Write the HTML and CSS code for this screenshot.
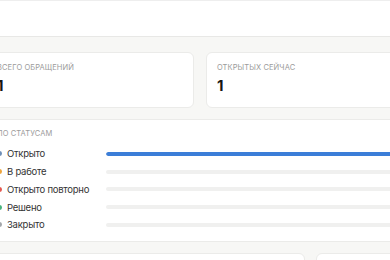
FILE: index.html
```html
<!DOCTYPE html>
<html lang="ru">
<head>
    <meta charset="UTF-8">
    <meta name="viewport" content="width=device-width, initial-scale=1.0">
    <title>Обращения</title>
    <link rel="stylesheet" href="styles.css">
</head>
<body>
    <header class="topbar"></header>

    <main class="dashboard">
        <div class="stats">
            <div class="card stat">
                <div class="card-label">Всего обращений</div>
                <div class="stat-value">1</div>
            </div>
            <div class="card stat">
                <div class="card-label">Открытых сейчас</div>
                <div class="stat-value">1</div>
            </div>
        </div>

        <div class="card statuses">
            <div class="card-label">По статусам</div>
            <ul class="status-list">
                <li class="status-row">
                    <span class="status-name"><i class="dot dot-open"></i>Открыто</span>
                    <span class="track"><span class="fill" style="width: 100%"></span></span>
                </li>
                <li class="status-row">
                    <span class="status-name"><i class="dot dot-work"></i>В работе</span>
                    <span class="track"><span class="fill" style="width: 0%"></span></span>
                </li>
                <li class="status-row">
                    <span class="status-name"><i class="dot dot-reopen"></i>Открыто повторно</span>
                    <span class="track"><span class="fill" style="width: 0%"></span></span>
                </li>
                <li class="status-row">
                    <span class="status-name"><i class="dot dot-solved"></i>Решено</span>
                    <span class="track"><span class="fill" style="width: 0%"></span></span>
                </li>
                <li class="status-row">
                    <span class="status-name"><i class="dot dot-closed"></i>Закрыто</span>
                    <span class="track"><span class="fill" style="width: 0%"></span></span>
                </li>
            </ul>
        </div>

        <div class="bottom">
            <div class="card block"></div>
            <div class="card block"></div>
        </div>
    </main>
</body>
</html>
```

FILE: styles.css
```css
* {
    box-sizing: border-box;
}

body {
    font-family: Inter, "Noto Sans", Arial, sans-serif;
    margin: 0;
    padding: 0;
    background-color: #f7f7f5;
    color: #222222;
    overflow: hidden;
}

.topbar {
    height: 37px;
    background-color: #ffffff;
    border-top: 1px solid #eeeeee;
    border-bottom: 1px solid #e8e8e6;
}

.dashboard {
    margin-left: -14px;
    width: 428px;
    padding: 15px 0;
    display: grid;
    gap: 11px;
}

.card {
    background-color: #ffffff;
    border: 1px solid #ebebe9;
    border-radius: 6px;
}

.card-label {
    font-size: 7.5px;
    line-height: 10px;
    text-transform: uppercase;
    color: #9b9b9b;
    letter-spacing: 0.1px;
}

/* Верхние карточки */
.stats {
    display: grid;
    grid-template-columns: 1fr 1fr;
    gap: 12px;
}

.stat {
    height: 56px;
    padding: 10px 10px 0;
}

.stat-value {
    margin-top: 3px;
    font-size: 15px;
    font-weight: 700;
    line-height: 19px;
    color: #161616;
}

/* Статусы */
.statuses {
    padding: 9px 10px 7px;
}

.status-list {
    list-style: none;
    margin: 6px 0 0;
    padding: 0;
}

.status-row {
    display: grid;
    grid-template-columns: 109px 1fr;
    align-items: center;
    height: 17.75px;
}

.status-name {
    display: flex;
    align-items: center;
    gap: 5px;
    font-size: 9.5px;
    letter-spacing: -0.25px;
    color: #333333;
}

.dot {
    width: 5px;
    height: 5px;
    border-radius: 50%;
    flex-shrink: 0;
}

.dot-open { background-color: #6f8fb8; }
.dot-work { background-color: #efa53c; }
.dot-reopen { background-color: #e4584f; }
.dot-solved { background-color: #47b37c; }
.dot-closed { background-color: #a3a6aa; }

.track {
    display: block;
    height: 4px;
    border-radius: 2px;
    background-color: #f0f0ef;
    overflow: hidden;
}

.fill {
    display: block;
    height: 100%;
    border-radius: 2px;
    background-color: #3b7ed8;
}

/* Нижние блоки */
.bottom {
    display: grid;
    grid-template-columns: 1fr 98px;
    gap: 11px;
}

.block {
    height: 80px;
}
```
